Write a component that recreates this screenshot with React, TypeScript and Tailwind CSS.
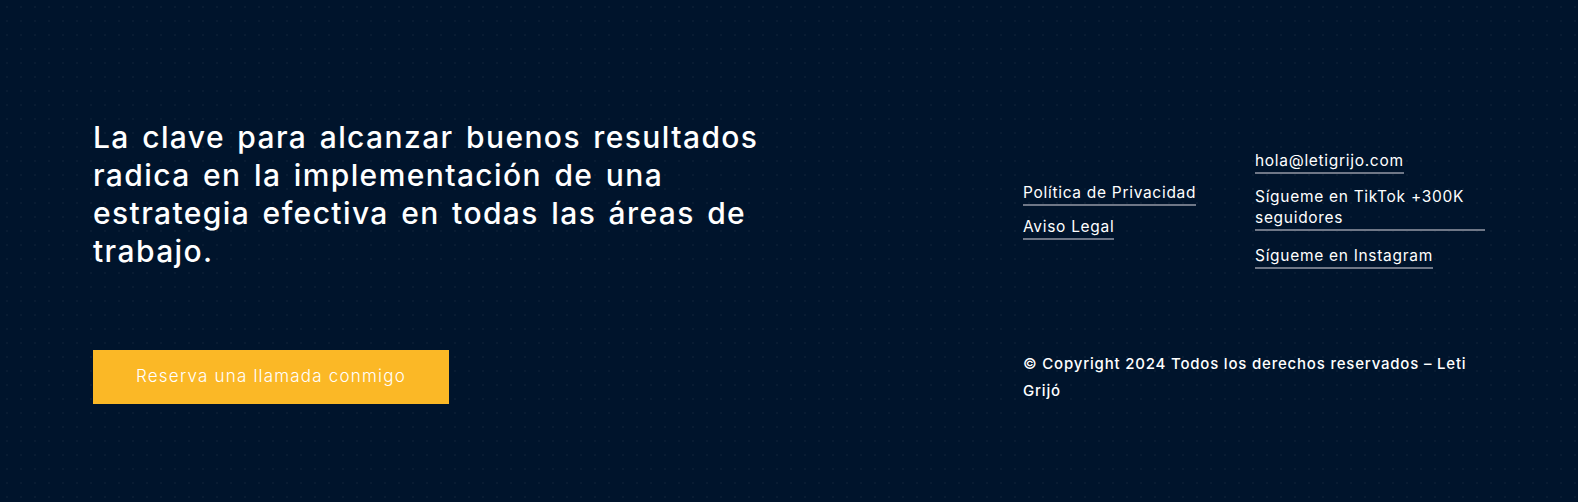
import React from 'react';

const linkCls =
  'inline-block border-b-2 border-[#6f7787] pb-[1px] text-[15.5px] leading-[21px] tracking-[0.7px] text-white';

export default function App() {
  return (
    <div
      className="h-[502px] w-full bg-[#00142c] bg-[radial-gradient(rgba(255,255,255,0.035)_1px,transparent_1px)] bg-[length:14px_14px] px-[93px] pt-[118px] text-white"
      style={{ fontFamily: 'Inter, "Noto Sans", sans-serif' }}
    >
      <div className="flex items-start justify-between">
        <h2 className="w-[700px] text-[30px] font-medium leading-[38px] tracking-[1.4px] [word-spacing:3px]">
          La clave para alcanzar buenos resultados
          <br />
          radica en la implementación de una
          <br />
          estrategia efectiva en todas las áreas de
          <br />
          trabajo.
        </h2>

        <div className="flex w-[462px] items-start">
          <ul className="mt-[62px] flex w-[232px] flex-col gap-[8px]">
            <li>
              <a className={linkCls}>Política de Privacidad</a>
            </li>
            <li>
              <a className={linkCls}>Aviso Legal</a>
            </li>
          </ul>
          <ul className="mt-[30px] flex w-[230px] flex-col gap-[12px]">
            <li>
              <a className={linkCls}>hola@letigrijo.com</a>
            </li>
            <li>
              <a className={`${linkCls} w-full`}>Sígueme en TikTok +300K seguidores</a>
            </li>
            <li>
              <a className={linkCls}>Sígueme en Instagram</a>
            </li>
          </ul>
        </div>
      </div>

      <div className="mt-[80px] flex items-start justify-between">
        <a className="flex h-[54px] w-[356px] items-center justify-center bg-[#fbb826] text-[17px] font-light tracking-[1.2px] text-white">
          Reserva una llamada conmigo
        </a>
        <p className="w-[462px] text-[15px] font-medium leading-[27px] tracking-[0.8px]">
          © Copyright 2024 Todos los derechos reservados – Leti Grijó
        </p>
      </div>
    </div>
  );
}
